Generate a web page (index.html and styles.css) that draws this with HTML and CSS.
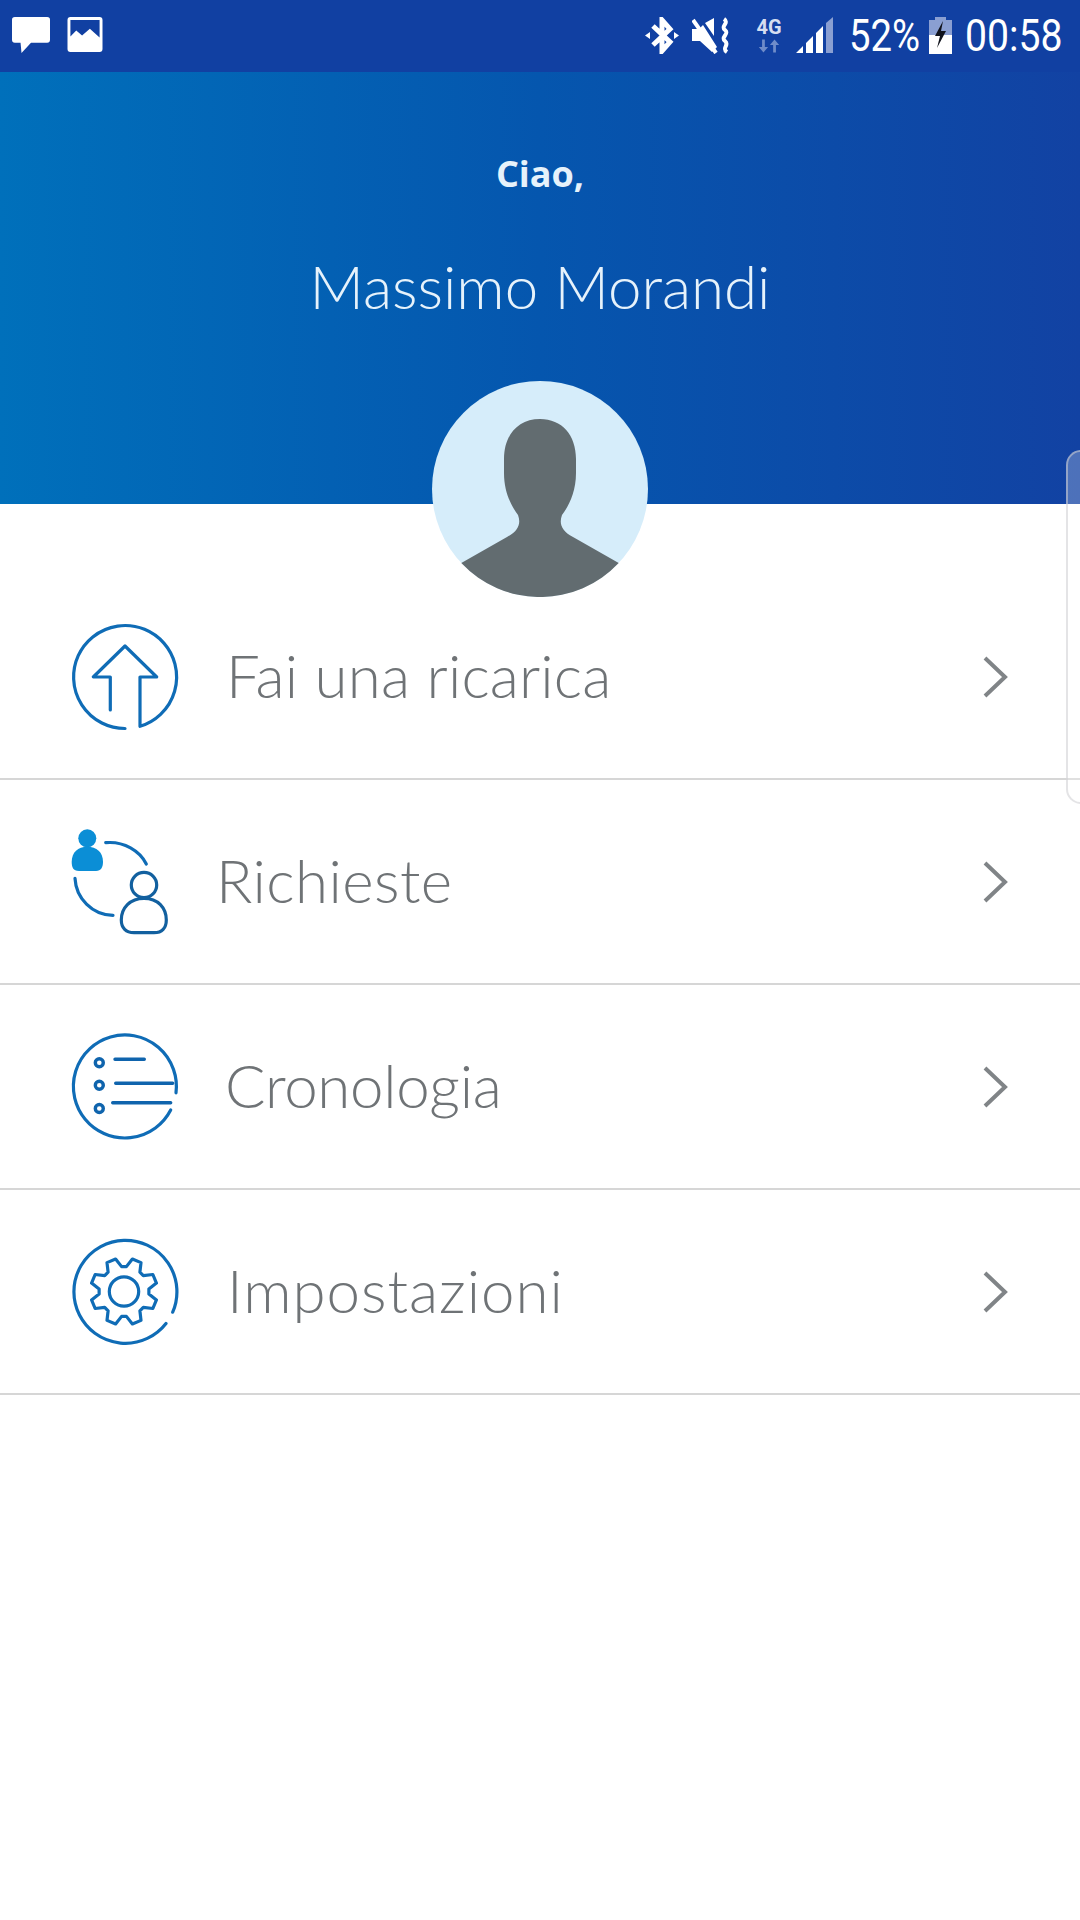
FILE: index.html
```html
<!DOCTYPE html>
<html lang="it">
<head>
<meta charset="utf-8">
<title>Menu</title>
<link rel="stylesheet" href="styles.css">
</head>
<body>
<div class="screen">
  <header class="status">
    <div class="status-left">
      <svg class="ic-chat" viewBox="0 0 40 40"><path class="w" d="M3 0H37a3 3 0 0 1 3 3V24a3 3 0 0 1-3 3H20L10 38 9 27H3a3 3 0 0 1-3-3V3a3 3 0 0 1 3-3Z"/></svg>
      <svg class="ic-pic" viewBox="0 0 36 36"><path class="w" fill-rule="evenodd" d="M3 0H33a3 3 0 0 1 3 3V33a3 3 0 0 1-3 3H3a3 3 0 0 1-3-3V3a3 3 0 0 1 3-3ZM3 3V20L9 14l6 5 8-7 10 9V3Z"/></svg>
    </div>
    <div class="status-right">
      <svg class="ic-bt" viewBox="0 0 34 37"><path class="ws" d="M8 9 25 25 17 34V3l8 9L8 28"/><path class="w" d="M0 18.500l5-3.500v7ZM34 18.500l-5-3.500v7Z"/></svg>
      <svg class="ic-mute" viewBox="0 0 38 37"><path class="w" d="M0 12H7L11 8 25 30 20 35 8 24H0ZM13 6 22 1V19Z"/><path class="ws-t" d="M1 3 24 36"/><path class="ws-t" d="M32 2C38 6 28 9 33 13S28 20 33 24 29 31 35 35"/></svg>
      <div class="net">
        <span class="net-label">4G</span>
        <svg class="ic-arrows" viewBox="0 0 26 14"><path class="f" d="M7 14 2 8H5.500V0H8.500V8H12ZM19 0 14 6H17.500V14H20.500V6H24Z"/></svg>
      </div>
      <svg class="ic-signal" viewBox="0 0 37 36"><path class="w" d="M0 36 7 29V36ZM10 26 17 19V36H10ZM20 16 27 9V36H20Z"/><path class="dim" d="M30 6 37 0V36H30Z"/></svg>
      <span class="st-pct">52%</span>
      <svg class="ic-batt" viewBox="0 0 23 37"><path class="dim" d="M6 0H17V3H23V18H0V3H6Z"/><path class="w" d="M0 18H23V37H0Z"/><path class="bolt" d="M14 4 6 19H11L8 31 17 14H12Z"/></svg>
      <span class="st-time">00:58</span>
    </div>
  </header>

  <section class="hero">
    <p class="hello">Ciao,</p>
    <h1 class="name">Massimo Morandi</h1>
    <svg class="avatar" viewBox="0 0 216 216">
      <circle class="av-bg" cx="108" cy="108" r="108"/>
      <path class="av-fig" d="M108 38C130 38 144 54 144 78V92C144 112 136 126 130 134C127 142 129 150 141 156L186.700 182A108 108 0 0 1 29.300 182L75 156C87 150 89 142 86 134C80 126 72 112 72 92V78C72 54 86 38 108 38Z"/>
    </svg>
  </section>

  <nav class="menu">
    <a class="row">
      <svg class="icon" viewBox="0 0 120 120">
        <path class="ln" d="M60 111.500A51.500 51.500 0 1 1 75 109.300V60H91.700L60 29 28.300 60H45.300V93"/>
      </svg>
      <span class="label label-a">Fai una ricarica</span>
      <svg class="chev" viewBox="0 0 26 44"><path d="M3 3 23 22 3 41"/></svg>
    </a>
    <a class="row">
      <svg class="icon" viewBox="1 0 120 120">
        <circle class="fil" cx="23.300" cy="16.300" r="9"/>
        <path class="fil" d="M15 49C9 49 7.700 45 7.700 40 7.700 30 14 24.700 23.300 24.700S39 30 39 40C39 45 37 49 32 49Z"/>
        <path class="ln" d="M41.700 20.700C60 19 76 29 82.300 42M11 56.300C12 76 28 93 49 93.300"/>
        <circle class="ln-d" cx="80" cy="63" r="12.700"/>
        <path class="ln-d" d="M70 110.700C62 110.700 57.300 106 57.300 98 57.300 86 66 76.300 80 76.300S102.300 86 102.300 98C102.300 106 98 110.700 90 110.700Z"/>
      </svg>
      <span class="label label-b">Richieste</span>
      <svg class="chev" viewBox="0 0 26 44"><path d="M3 3 23 22 3 41"/></svg>
    </a>
    <a class="row">
      <svg class="icon" viewBox="0 0 120 120">
        <path class="ln" d="M111 65.800A51.500 51.500 0 1 0 105.700 83"/>
        <circle class="ln-b" cx="34.300" cy="35.800" r="4"/>
        <circle class="ln-b" cx="34.300" cy="58.200" r="4"/>
        <circle class="ln-b" cx="34.300" cy="81.500" r="4"/>
        <path class="ln-b" d="M50 32.200H79.300M50.700 56.200H107.700M47.700 75.800H105.700"/>
      </svg>
      <span class="label label-c">Cronologia</span>
      <svg class="chev" viewBox="0 0 26 44"><path d="M3 3 23 22 3 41"/></svg>
    </a>
    <a class="row">
      <svg class="icon" viewBox="0 0 120 120">
        <path class="ln" d="M107.700 80.200A51.500 51.500 0 1 0 101 91.500"/>
        <circle class="ln" cx="59" cy="59.500" r="14.700"/>
        <path class="ln" transform="translate(59 59.500)" d="M24.880 2.400 32.430 8.390 28.860 17 19.290 15.900 15.900 19.290 17 28.860 8.390 32.430 2.400 24.880-2.400 24.880-8.390 32.430-17 28.860-15.900 19.290-19.290 15.900-28.860 17-32.430 8.390-24.880 2.400-24.880-2.400-32.430-8.390-28.860-17-19.290-15.900-15.900-19.290-17-28.860-8.390-32.430-2.400-24.880 2.400-24.880 8.390-32.430 17-28.860 15.900-19.290 19.290-15.900 28.860-17 32.430-8.390 24.880-2.400Z"/>
      </svg>
      <span class="label label-d">Impostazioni</span>
      <svg class="chev" viewBox="0 0 26 44"><path d="M3 3 23 22 3 41"/></svg>
    </a>
  </nav>

  <div class="edge-handle"></div>
</div>
</body>
</html>
```

FILE: styles.css
```css
* { box-sizing: border-box; }
html, body { margin: 0; padding: 0; background: #fff; }
.screen { position: relative; width: 1080px; height: 1920px; overflow: hidden; background: #fff; font-family: Lato, "Open Sans", sans-serif; }

.status { height: 72px; background: #1140a2; display: flex; justify-content: space-between; align-items: flex-start; padding: 17px 18px 0 12px; }
.status-left { display: flex; gap: 17px; }
.status-right { display: flex; align-items: flex-start; }
.ic-chat { width: 38px; height: 38px; }
.ic-pic { width: 36px; height: 35px; margin-top: 0; }
.w { fill: #fff; }
.dim { fill: #8a9fd2; }
.bolt { fill: #10131c; }
.f { fill: #6f8cc9; }
.ws { fill: none; stroke: #fff; stroke-width: 5; stroke-linejoin: miter; }
.ws-t { fill: none; stroke: #fff; stroke-width: 4; }
.ic-bt { width: 34px; height: 37px; }
.ic-mute { width: 38px; height: 37px; margin-left: 13px; }
.net { width: 28px; margin-left: 25px; display: flex; flex-direction: column; align-items: center; }
.net-label { font: 700 20px/20px Roboto, sans-serif; color: #d5def1; height: 22px; }
.ic-arrows { width: 24px; height: 14px; }
.ic-signal { width: 37px; height: 36px; margin-left: 13px; }
.st-pct, .st-time { font: 400 44px/38px Roboto, sans-serif; color: #fff; transform-origin: left center; white-space: nowrap; }
.st-pct { width: 70px; margin-left: 16px; transform: scaleX(.87); }
.ic-batt { width: 23px; height: 37px; margin-left: 10px; }
.st-time { width: 97px; margin-left: 13px; transform: scaleX(.89); }

.hero { position: relative; height: 432px; background: linear-gradient(90deg, #0070bb 0%, #0556ae 50%, #1242a3 100%); text-align: center; color: #fff; padding-top: 80px; }
.hello { margin: 0; font: 700 36px/44px "Open Sans", sans-serif; color: #e6f2fb; }
.name { margin: 56px 0 0; font: 300 60px/68px Lato, sans-serif; color: #e6f2fb; }
.avatar { position: absolute; left: 432px; top: 309px; width: 216px; height: 216px; }
.av-bg { fill: #d6edfa; }
.av-fig { fill: #626c70; }

.menu { padding-top: 71px; }
.row { height: 205px; border-bottom: 2px solid #d6d6d6; display: flex; align-items: center; padding: 0 72px 0 65px; }
.icon { width: 120px; height: 120px; flex: none; }
.ln, .ln-b, .ln-d { fill: none; stroke-linejoin: round; stroke-linecap: round; }
.ln { stroke: #0f6cb6; stroke-width: 3.200; }
.ln-b { stroke: #0f64ad; stroke-width: 3.400; }
.ln-d { stroke: #12609f; stroke-width: 3.200; }
.fil { fill: #0b8ed6; }
.label { flex: 1; margin-top: -4px; font: 300 60px/70px Lato, sans-serif; letter-spacing: .3px; color: #6f7376; }
.label-a { margin-left: 41px; letter-spacing: .15px; }
.label-b { margin-left: 31px; letter-spacing: .45px; }
.label-c { margin-left: 40px; letter-spacing: -.3px; }
.label-d { margin-left: 42px; letter-spacing: 1px; }
.chev { width: 26px; height: 44px; flex: none; fill: none; stroke: #808487; stroke-width: 4; }

.edge-handle { position: absolute; left: 1066px; top: 450px; width: 30px; height: 354px; border: 2px solid rgba(205,205,210,.55); border-radius: 20px; background: rgba(255,255,255,.25); }
```
